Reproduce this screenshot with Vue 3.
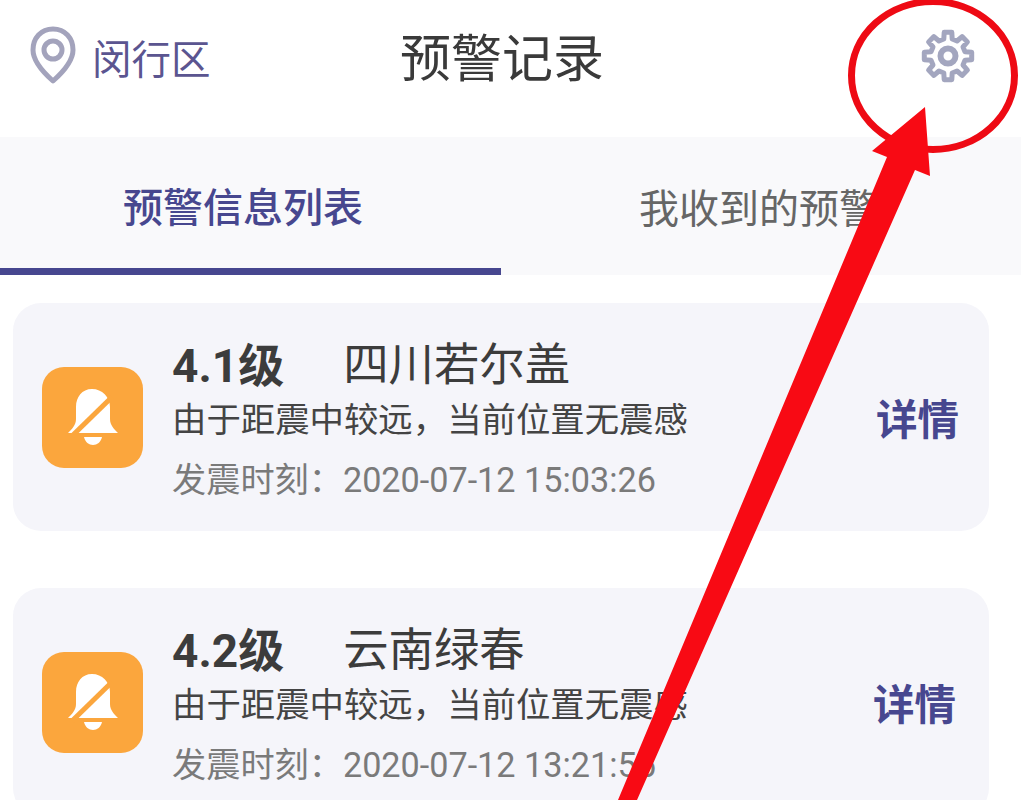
<script setup>
const records = [
  { id: 1, level: "4.1级", place: "四川若尔盖", time: "2020-07-12 15:03:26" },
  { id: 2, level: "4.2级", place: "云南绿春", time: "2020-07-12 13:21:55" },
];

// eight rounded teeth around the centre of a 54x54 box
const gearPath = (() => {
  const pts = [];
  const at = (deg, r) => {
    const a = ((deg - 90) * Math.PI) / 180;
    return `${(27 + r * Math.cos(a)).toFixed(1)} ${(27 + r * Math.sin(a)).toFixed(1)}`;
  };
  for (let i = 0; i < 8; i++) {
    const mid = i * 45;
    pts.push(at(mid - 14, 17.500), at(mid - 9, 24), at(mid + 9, 24), at(mid + 14, 17.500));
  }
  return "M" + pts.join("L") + "Z";
})();
</script>

<template>
  <div class="page">
    <header class="top">
      <div class="city">
        <svg class="pin" viewBox="0 0 46 58">
          <path
            d="M23 3C11 3 3 12 3 24C3 35 14 47 23 55C32 47 43 35 43 24C43 12 35 3 23 3Z"
            fill="none"
            stroke="#a3a3bc"
            stroke-width="5"
            stroke-linejoin="round"
          />
          <circle cx="23" cy="24" r="9" fill="none" stroke="#a3a3bc" stroke-width="5" />
        </svg>
        <span>闵行区</span>
      </div>
      <h1>预警记录</h1>
      <svg class="gear" viewBox="0 0 54 54">
        <path :d="gearPath" fill="none" stroke="#a3a6bf" stroke-width="5" stroke-linejoin="round" />
        <circle cx="27" cy="27" r="7.500" fill="none" stroke="#a3a6bf" stroke-width="6" />
      </svg>
    </header>

    <nav class="tabs">
      <div class="tab active">预警信息列表</div>
      <div class="tab">我收到的预警</div>
    </nav>

    <section class="list">
      <article v-for="item in records" :key="item.id" class="card">
        <div class="badge">
          <svg viewBox="0 0 50 56" width="50" height="56">
            <path
              d="M24 0C14 0 8 8 8 18V30C8 36 4 40 0 44H50C46 40 42 36 42 30V18C42 8 34 0 24 0Z"
              fill="#fff"
            />
            <path d="M16 48H34C33 53 29 56 25 56C21 56 17 53 16 48Z" fill="#fff" />
            <path d="M44 8L4 47" stroke="#fba63d" stroke-width="5" />
          </svg>
        </div>
        <div class="info">
          <div class="title">
            <b>{{ item.level }}</b>
            <span>{{ item.place }}</span>
          </div>
          <p class="note">由于距震中较远，当前位置无震感</p>
          <p class="time">发震时刻：{{ item.time }}</p>
        </div>
        <div class="more">详情</div>
      </article>
    </section>

    <!-- red annotation drawn over the screenshot -->
    <svg class="marks" viewBox="0 0 1021 800" width="1021" height="800">
      <ellipse cx="933" cy="75.500" rx="81.500" ry="74" fill="none" stroke="#ee0a14" stroke-width="7" />
      <path d="M925 107L930 176L915 170L637 800H618L887 157L872 151Z" fill="#f80a14" />
    </svg>
  </div>
</template>

<style scoped>
.page {
  position: relative;
  width: 1021px;
  height: 800px;
  overflow: hidden;
  background: #fff;
  font-family: "Roboto", "Noto Sans CJK SC", sans-serif;
}

.top {
  height: 137px;
  display: flex;
  align-items: center;
  padding: 0 46px 24px 30px;
  box-sizing: border-box;
}

.city {
  width: 370px;
  display: flex;
  align-items: center;
  gap: 16px;
  font-size: 39.500px;
  color: #5b5590;
}

.pin {
  width: 46px;
  height: 58px;
  margin-bottom: 4px;
}

h1 {
  margin: 5px 0 0;
  font-size: 51px;
  font-weight: 400;
  color: #3a3a3a;
  line-height: 1;
}

.gear {
  width: 54px;
  height: 54px;
  margin-left: auto;
  margin-bottom: 2px;
}

.tabs {
  height: 138px;
  display: flex;
  background: #f9f9fb;
}

.tab {
  flex: 1;
  display: flex;
  align-items: center;
  justify-content: center;
  font-size: 40px;
  color: #666;
  padding: 0 4px 1px 0;
}

.tab:first-child {
  flex: 0 0 501px;
  padding-right: 15px;
  box-sizing: border-box;
}

.active {
  color: #47478f;
  font-weight: 500;
  border-bottom: 7px solid #47478f;
  padding-top: 4px;
  padding-bottom: 0;
}

.list {
  padding: 28px 32px 0 13px;
  display: flex;
  flex-direction: column;
  gap: 57px;
}

.card {
  height: 228px;
  flex-shrink: 0;
  border-radius: 28px;
  background: #f5f5fa;
  display: flex;
  align-items: center;
  padding: 0 30px 0 29px;
  box-sizing: border-box;
}

.badge {
  width: 101px;
  height: 101px;
  border-radius: 22px;
  background: #fba63d;
  display: flex;
  align-items: center;
  justify-content: center;
  flex-shrink: 0;
}

.info {
  flex: 1;
  margin-left: 29px;
  padding-top: 8px;
  color: #444;
}

.title {
  display: flex;
  align-items: center;
  gap: 59px;
  font-size: 45.400px;
  line-height: 58px;
  color: #3c3c3c;
}

.title b {
  font-size: 46px;
  min-width: 112px;
}

p {
  margin: 0;
}

.note {
  font-size: 34.400px;
  line-height: 50px;
}

.time {
  margin-top: 10px;
  font-size: 34.200px;
  line-height: 50px;
  color: #7a7a7a;
}

.more {
  font-size: 41.500px;
  font-weight: 700;
  color: #47478f;
}

.card:nth-child(2) .more {
  margin-right: 3px;
}

.marks {
  position: absolute;
  top: 0;
  left: 0;
  pointer-events: none;
}
</style>

<style>
html,
body {
  margin: 0;
  background: #fff;
}
</style>
